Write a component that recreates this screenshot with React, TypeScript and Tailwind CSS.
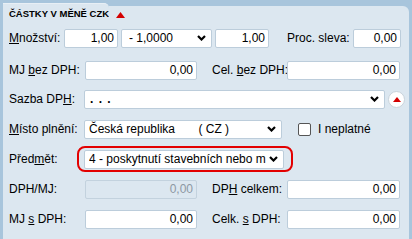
import React from "react";

const font = { fontFamily: '"Liberation Sans", Arial, sans-serif' };

function Chevron() {
  return (
    <svg width="9" height="6" viewBox="0 0 9 6" className="shrink-0">
      <polyline points="1,1 4.5,4.5 8,1" fill="none" stroke="#000" strokeWidth="2.2" />
    </svg>
  );
}

function Input({ w, value = "0,00", disabled = false }: { w: string; value?: string; disabled?: boolean }) {
  return (
    <div
      className={`${w} h-[19px] shrink-0 rounded-[2px] border flex items-center justify-end pr-[3px] text-[12px] ${
        disabled ? "bg-[#dce7f0] border-[#c3d2de] text-[#8c98a3]" : "bg-white border-[#bccddb] text-black"
      }`}
    >
      {value}
    </div>
  );
}

function Select({ w, children, pl = "pl-[4px]" }: { w: string; children: React.ReactNode; pl?: string }) {
  return (
    <div
      className={`${w} h-[19px] shrink-0 rounded-[2px] border border-[#bccddb] bg-white flex items-center justify-between ${pl} pr-[5px] text-[12px] text-black overflow-hidden whitespace-pre`}
    >
      <span className="overflow-hidden">{children}</span>
      <Chevron />
    </div>
  );
}

function Label({ w, children }: { w: string; children: React.ReactNode }) {
  return <div className={`${w} shrink-0 text-[12px] text-black whitespace-nowrap`}>{children}</div>;
}

function Tri() {
  return (
    <svg width="9" height="6" viewBox="0 0 9 6">
      <polygon points="0,6 4.5,0 9,6" fill="#d40000" />
    </svg>
  );
}

export default function App() {
  return (
    <div className="w-[412px] h-[239px] bg-[#a8c5dc] overflow-hidden" style={font}>
      <div className="flex h-[23px] pt-[3px] pl-[3px] pr-[3px]">
        <div className="w-[106px] bg-[#dce7f0] rounded-tr-[5px] border-t border-[#e8eff5] flex items-center pl-[6px] pt-[2px]">
          <span className="text-[9.5px] font-bold text-black whitespace-nowrap">ČÁSTKY V MĚNĚ CZK</span>
        </div>
        <div className="flex-1 mt-[3px] bg-[#dce7f0] rounded-tr-[6px] flex items-center pl-[7px] pt-[1px]">
          <Tri />
        </div>
      </div>
      <div className="mx-[3px] bg-[#dce7f0] h-[216px] pl-[6px]">
        {/* row 1 */}
        <div className="h-[30px] flex items-center">
          <Label w="w-[55px]">
            <u>M</u>nožství:
          </Label>
          <Input w="w-[54px]" value="1,00" />
          <div className="w-[3px]" />
          <Select w="w-[91px]" pl="pl-[7px]">- 1,0000</Select>
          <div className="w-[3px]" />
          <Input w="w-[54px]" value="1,00" />
          <div className="w-[18px]" />
          <Label w="w-[66px]">Proc. sleva:</Label>
          <Input w="w-[48px]" />
        </div>
        {/* row 2 */}
        <div className="h-[30px] mt-[2px] flex items-center">
          <Label w="w-[76px]">
            MJ <u>b</u>ez DPH:
          </Label>
          <Input w="w-[112px]" />
          <div className="w-[15px]" />
          <Label w="w-[75px]">
            Cel. <u>b</u>ez DPH:
          </Label>
          <Input w="w-[113px]" />
        </div>
        {/* row 3 */}
        <div className="h-[30px] -mt-[1px] flex items-center">
          <Label w="w-[75px]">
            Sazba DP<u>H</u>:
          </Label>
          <Select w="w-[301px]" pl="pl-[5px]">
            <span className="font-bold tracking-[1px]">. . .</span>
          </Select>
          <div className="w-[3px]" />
          <div className="w-[17px] h-[17px] rounded-full bg-white border border-[#c9d3db] flex items-center justify-center">
            <svg width="8" height="5" viewBox="0 0 8 5">
              <polygon points="0,5 4,0 8,5" fill="#d40000" />
            </svg>
          </div>
        </div>
        {/* row 4 */}
        <div className="h-[30px] flex items-center">
          <Label w="w-[75px]">
            <u>M</u>ísto plnění:
          </Label>
          <Select w="w-[198px]">{"Česká republika       ( CZ )"}</Select>
          <div className="w-[16px]" />
          <div className="w-[13px] h-[13px] rounded-[2px] border border-[#555] bg-white" />
          <div className="w-[7px]" />
          <span className="text-[12px] text-black">I neplatné</span>
        </div>
        {/* row 5 */}
        <div className="h-[30px] flex items-center">
          <Label w="w-[68px]">
            Před<u>m</u>ět:
          </Label>
          <div className="h-[26px] w-[216px] rounded-[8px] border-2 border-[#e30000] flex items-center pl-[5px]">
            <Select w="w-[200px]">4 - poskytnutí stavebních nebo m</Select>
          </div>
        </div>
        {/* row 6 */}
        <div className="h-[30px] flex items-center">
          <Label w="w-[76px]">DPH/MJ:</Label>
          <Input w="w-[112px]" disabled />
          <div className="w-[15px]" />
          <Label w="w-[75px]">
            DP<u>H</u> celkem:
          </Label>
          <Input w="w-[113px]" />
        </div>
        {/* row 7 */}
        <div className="h-[30px] flex items-center">
          <Label w="w-[76px]">
            MJ <u>s</u> DPH:
          </Label>
          <Input w="w-[112px]" />
          <div className="w-[15px]" />
          <Label w="w-[75px]">
            Celk. <u>s</u> DPH:
          </Label>
          <Input w="w-[113px]" />
        </div>
      </div>
    </div>
  );
}
